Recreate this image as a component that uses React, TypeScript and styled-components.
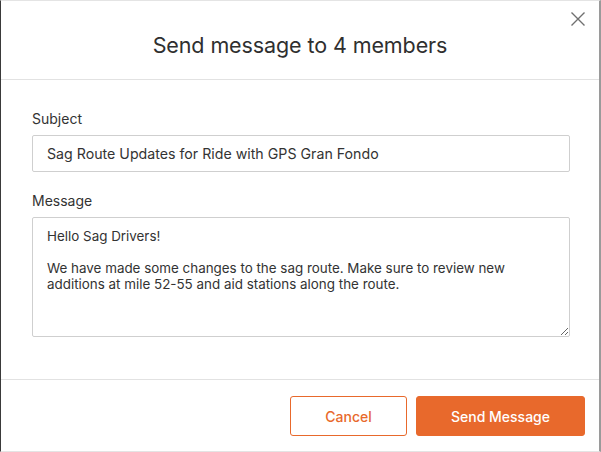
import * as React from 'react';
import styled, { createGlobalStyle } from 'styled-components';

const GlobalStyle = createGlobalStyle`
  html, body {
    margin: 0;
    padding: 0;
    background: #ffffff;
  }
  * {
    box-sizing: border-box;
  }
`;

const ACCENT = '#e8692c';

const Dialog = styled.div`
  width: 601px;
  height: 452px;
  display: flex;
  flex-direction: column;
  background: #fff;
  border-top: 1px solid #e4e4e4;
  border-bottom: 1px solid #e4e4e4;
  border-left: 1px solid #3a3a3a;
  border-right: 2px solid #9a9a9a;
  font-family: Inter, 'Liberation Sans', sans-serif;
  color: #333;
`;

const Header = styled.div`
  position: relative;
  height: 79px;
  flex-shrink: 0;
  display: flex;
  align-items: center;
  justify-content: center;
  border-bottom: 1px solid #e2e2e2;
`;

const Title = styled.h2`
  margin: 0;
  padding-top: 10px;
  font-size: 21.5px;
  font-weight: 400;
  color: #2f2f2f;
  letter-spacing: -0.1px;
`;

const CloseButton = styled.button`
  position: absolute;
  top: 9px;
  right: 12px;
  width: 18px;
  height: 18px;
  padding: 0;
  border: 0;
  background: none;
  display: flex;
  align-items: center;
  justify-content: center;
  cursor: pointer;
`;

const Body = styled.div`
  flex: 1;
  padding: 30px 29px 0 31px;
  display: flex;
  flex-direction: column;
`;

const Field = styled.div`
  display: flex;
  flex-direction: column;
  gap: 8px;
  margin-bottom: 20px;
`;

const Label = styled.label`
  font-size: 14px;
  line-height: 17px;
  color: #333;
`;

const TextInput = styled.input`
  height: 37px;
  width: 100%;
  padding: 0 14px;
  border: 1px solid #cfcfcf;
  border-radius: 2px;
  font-family: inherit;
  font-size: 14.2px;
  color: #333;
  outline: none;
`;

const TextArea = styled.textarea`
  height: 120px;
  width: 100%;
  padding: 10px 14px;
  border: 1px solid #cfcfcf;
  border-radius: 2px;
  font-family: inherit;
  font-size: 13.4px;
  line-height: 16px;
  color: #333;
  outline: none;
  resize: vertical;
`;

const Footer = styled.div`
  height: 72px;
  flex-shrink: 0;
  border-top: 1px solid #e2e2e2;
  display: flex;
  align-items: center;
  justify-content: flex-end;
  gap: 9px;
  padding: 1px 14px 0 0;
`;

const Button = styled.button<{ primary?: boolean }>`
  height: 40px;
  border-radius: 3px;
  font-family: inherit;
  font-size: 14px;
  font-weight: 500;
  cursor: pointer;
  border: 1px solid ${ACCENT};
  background: ${p => (p.primary ? ACCENT : '#fff')};
  color: ${p => (p.primary ? '#fff' : ACCENT)};
  width: ${p => (p.primary ? '169px' : '117px')};
`;

export default function App() {
  return (
    <>
      <GlobalStyle />
      <Dialog>
        <Header>
          <Title>Send message to 4 members</Title>
          <CloseButton aria-label="Close">
            <svg width="16" height="16" viewBox="0 0 16 16">
              <path d="M1.5 1.5 L14.5 14.5 M14.5 1.5 L1.5 14.5" stroke="#707070" strokeWidth="1.4" fill="none" />
            </svg>
          </CloseButton>
        </Header>
        <Body>
          <Field>
            <Label>Subject</Label>
            <TextInput defaultValue="Sag Route Updates for Ride with GPS Gran Fondo" />
          </Field>
          <Field>
            <Label>Message</Label>
            <TextArea
              defaultValue={
                'Hello Sag Drivers!\n\nWe have made some changes to the sag route. Make sure to review new additions at mile 52-55 and aid stations along the route.'
              }
            />
          </Field>
        </Body>
        <Footer>
          <Button>Cancel</Button>
          <Button primary>Send Message</Button>
        </Footer>
      </Dialog>
    </>
  );
}
